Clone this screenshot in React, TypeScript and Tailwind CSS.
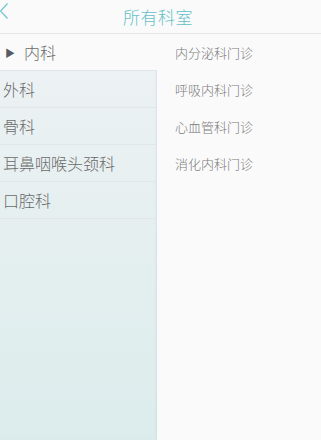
import React, { useState } from 'react';

const DEPARTMENTS = ['内科', '外科', '骨科', '耳鼻咽喉头颈科', '口腔科'];

const CLINICS: Record<string, string[]> = {
  内科: ['内分泌科门诊', '呼吸内科门诊', '心血管科门诊', '消化内科门诊'],
};

export default function App() {
  const [selected, setSelected] = useState('内科');
  const clinics = CLINICS[selected] ?? [];

  return (
    <div
      className="flex h-[440px] w-[321px] flex-col overflow-hidden bg-[#fafafa]"
      style={{ fontFamily: '"Noto Sans CJK SC", "Noto Sans", sans-serif' }}
    >
      {/* Header */}
      <div className="relative flex h-[34px] shrink-0 items-center justify-center border-b border-[#e3e5e6] bg-[#fafafa]">
        <button className="absolute -left-[2px] top-[2px] text-[#6cc6cc]">
          <svg width="11" height="18" viewBox="0 0 11 18" fill="none">
            <path d="M9.5 1.5 L2.5 9 L9.5 16.5" stroke="currentColor" strokeWidth="1.2" />
          </svg>
        </button>
        <h1 className="mr-[5px] text-[17px] font-light leading-none tracking-[0.5px] text-[#64bfc8]">所有科室</h1>
      </div>

      <div className="flex flex-1">
        {/* Department list */}
        <div className="flex w-[157px] shrink-0 flex-col bg-gradient-to-b from-[#eef2f4] to-[#dcecec] shadow-[inset_-2px_0_2px_-1px_rgba(180,200,205,0.35)]">
          {DEPARTMENTS.map(d => {
            const active = d === selected;
            return (
              <button
                key={d}
                onClick={() => setSelected(d)}
                className={`flex h-[37px] items-center border-b border-[#e1e6e8] text-left text-[16px] font-light text-[#6a6a6a] ${
                  active ? 'bg-[#fafafa] pl-[5px]' : 'pl-[3px]'
                }`}
              >
                {active && <span className="mr-[9px] text-[10px] text-[#555c63]">▶</span>}
                {d}
              </button>
            );
          })}
        </div>

        {/* Clinics */}
        <div className="flex flex-1 flex-col pl-[18px]">
          {clinics.map(c => (
            <div key={c} className="flex h-[37px] items-center text-[13px] font-light text-[#7a7a7a]">
              {c}
            </div>
          ))}
        </div>
      </div>
    </div>
  );
}
